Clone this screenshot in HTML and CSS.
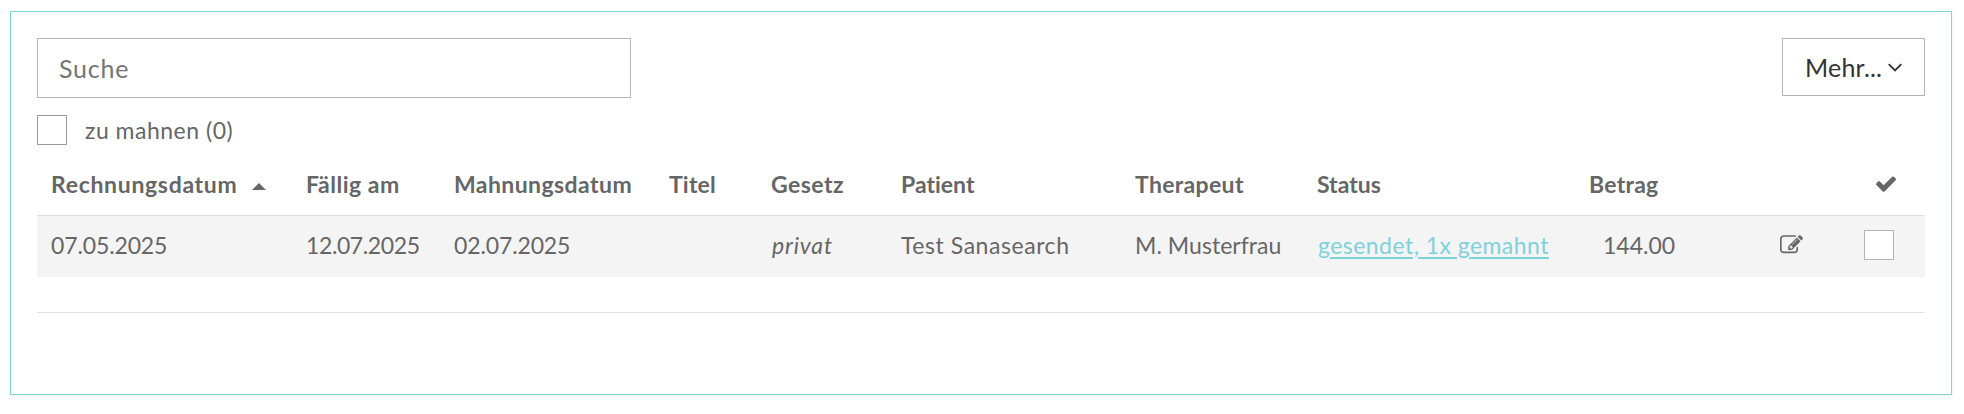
FILE: index.html
```
<!DOCTYPE html>
<html lang="de">
<head>
<meta charset="utf-8">
<title>Rechnungen</title>
<link rel="stylesheet" href="styles.css">
</head>
<body>
<main class="panel">
  <div class="toolbar">
    <input class="search" type="text" placeholder="Suche">
    <button class="more" type="button"><span>Mehr...</span><svg class="chevron" viewBox="0 0 14 9"><path d="M.7 1.2 7 7.4 13.3 1.2"/></svg></button>
  </div>
  <label class="filter"><input class="check" type="checkbox"><span>zu mahnen (0)</span></label>
  <div class="table">
    <div class="row head">
      <div class="cell"><span class="ls-rd">Rechnungsdatum</span><svg class="sort" viewBox="0 0 14 7"><path d="M0 7 7 0l7 7z"/></svg></div>
      <div class="cell ls-fa">Fällig am</div>
      <div class="cell ls-md">Mahnungsdatum</div>
      <div class="cell ls-ti">Titel</div>
      <div class="cell ls-ge">Gesetz</div>
      <div class="cell">Patient</div>
      <div class="cell ls-th">Therapeut</div>
      <div class="cell">Status</div>
      <div class="cell ls-be">Betrag</div>
      <div class="cell"></div>
      <div class="cell tick"><svg viewBox="121 190 1550 1188"><path d="M1671 430q0 40-28 68l-724 724-136 136q-28 28-68 28t-68-28l-136-136-362-362q-28-28-28-68t28-68l136-136q28-28 68-28t68 28l294 295 656-657q28-28 68-28t68 28l136 136q28 28 28 68z"/></svg></div>
    </div>
    <div class="row item">
      <div class="cell ls-d1">07.05.2025</div>
      <div class="cell ls-d2">12.07.2025</div>
      <div class="cell ls-d1">02.07.2025</div>
      <div class="cell"></div>
      <div class="cell ls-pr"><em>privat</em></div>
      <div class="cell ls-ts">Test Sanasearch</div>
      <div class="cell ls-mm">M. Musterfrau</div>
      <div class="cell ls-st"><a href="#">gesendet, 1x gemahnt</a></div>
      <div class="cell amount">144.00</div>
      <div class="cell edit"><svg viewBox="0 0 1792 1536"><path d="M888 1056l116-116-152-152-116 116v56h96v96h56zm440-720q-16-16-33 1L945 687q-17 17-1 33t33-1l350-350q17-17 1-33zm80 594v190q0 119-84.500 203.500T1120 1408H288q-119 0-203.500-84.500T0 1120V288Q0 169 84.500 84.500T288 0h832q63 0 117 25 15 7 18 23 3 17-9 29l-49 49q-14 14-32 8-23-6-45-6H288q-66 0-113 47t-47 113v832q0 66 47 113t113 47h832q66 0 113-47t47-113V994q0-13 9-22l64-64q15-15 35-7t20 29zm-96-738l288 288-672 672H640V864zm444 132l-92 92-288-288 92-92q28-28 68-28t68 28l152 152q28 28 28 68t-28 68z"/></svg></div>
      <div class="cell pick"><input class="check" type="checkbox"></div>
    </div>
  </div>
  <hr class="rule">
</main>
</body>
</html>
```

FILE: styles.css
```
* { box-sizing: border-box; }
body {
  margin: 0;
  padding: 11px 12px 19px 10px;
  background: #fff;
  color: #666;
  font: 23px/28px Lato, "Open Sans", sans-serif;
  font-variant-ligatures: none;
}
.panel {
  height: 384px;
  padding: 26px;
  border: 1px solid #83d4d8;
  box-shadow: 0 2px 4px rgba(0, 0, 0, .06);
}
.toolbar {
  display: flex;
  justify-content: space-between;
  align-items: flex-start;
}
.search {
  width: 594px;
  height: 60px;
  padding: 0 21px 1px;
  border: 1px solid #b5b5b5;
  font: 25px/30px Lato, sans-serif;
  letter-spacing: .8px;
}
.search::placeholder { color: #757575; opacity: 1; }
.more {
  display: flex;
  align-items: center;
  gap: 6px;
  width: 143px;
  height: 58px;
  padding: 0 0 0 22px;
  border: 1px solid #b5b5b5;
  background: #fff;
  color: #333;
  font: 25px/30px Lato, sans-serif;
  letter-spacing: .2px;
}
.chevron { width: 14px; height: 9px; fill: none; stroke: #333; stroke-width: 1.8; }
.filter {
  display: flex;
  align-items: center;
  gap: 18px;
  height: 30px;
  margin-top: 17px;
  letter-spacing: .5px;
}
.check {
  appearance: none;
  flex: none;
  width: 30px;
  height: 30px;
  margin: 0;
  border: 1px solid #999;
  background: #fff;
}
.table { margin-top: 9px; }
.row {
  display: grid;
  grid-template-columns: 255px 148px 215px 102px 130px 234px 182px 272px 190px 85px 1fr;
  align-items: center;
}
.cell {
  display: flex;
  align-items: center;
  padding-left: 14px;
  white-space: nowrap;
}
.head { height: 62px; border-bottom: 1px solid #ddd; padding-bottom: 1px; font-weight: 700; }
.item { height: 61px; padding-bottom: 4px; background: #f4f4f4; }
.sort { width: 14px; height: 7px; margin: 4px 0 0 15px; fill: #666; }
.tick { padding-left: 26px; }
.tick svg { width: 20px; height: 16px; fill: #666; }
.item a { color: #7fd1d9; text-underline-offset: 3px; text-decoration-thickness: 2px; }
.amount { padding-left: 28px; }
.edit { padding-left: 15px; }
.edit svg { width: 23px; height: 20px; fill: #666; }
.pick .check { margin-top: 1px; border-color: #b5b5b5; }
.rule { margin: 35px 0 0; border: 0; border-top: 1px solid #e3e3e3; }

.ls-rd { letter-spacing: .68px; }
.ls-fa { letter-spacing: .52px; }
.ls-md { letter-spacing: .42px; }
.ls-ti { letter-spacing: .17px; }
.ls-ge { letter-spacing: .46px; }
.ls-th { letter-spacing: .33px; }
.ls-be { letter-spacing: .25px; }
.ls-d1 { letter-spacing: -.13px; }
.ls-d2 { letter-spacing: -.4px; }
.ls-pr { letter-spacing: .85px; padding-left: 15px; }
.ls-ts { letter-spacing: .55px; }
.ls-mm { letter-spacing: .05px; }
.ls-st { letter-spacing: .45px; padding-left: 15px; }
```
